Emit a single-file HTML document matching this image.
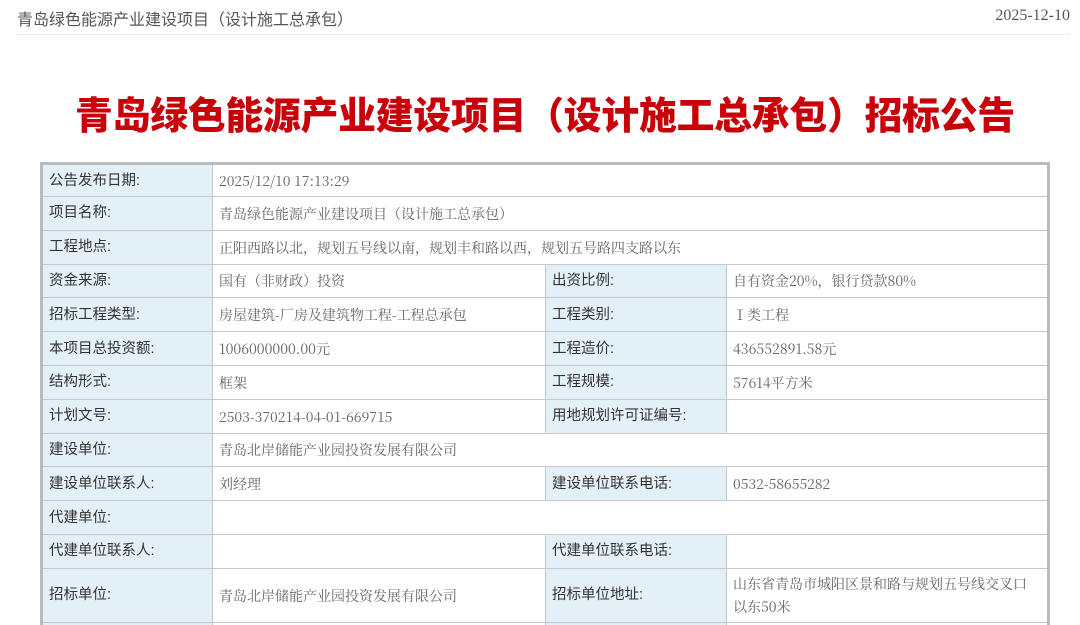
<!DOCTYPE html>
<html><head><meta charset="utf-8"><style>
*{margin:0;padding:0;box-sizing:border-box}
html,body{width:1080px;height:625px;overflow:hidden}
body{background:#fff;font-family:"Liberation Sans","Noto Sans CJK SC",sans-serif;position:relative}
.hd{position:absolute;left:17px;top:6px;font-size:16px;color:#555;}
.dt{position:absolute;right:10px;top:7px;font-size:16px;color:#555;font-family:"Liberation Serif","Noto Serif CJK SC",serif}
.line{position:absolute;left:16px;right:10px;top:34px;border-top:1px dotted #ddd}
h1{position:absolute;left:0;width:1090px;top:89px;text-align:center;font-size:37.8px;color:#c8000a;font-weight:900;letter-spacing:-0.2px;line-height:48px;font-family:"Noto Sans CJK SC",sans-serif;white-space:nowrap}
table{position:absolute;left:40px;top:162px;width:1010px;border-collapse:collapse;border:3px solid #b8bcc0;border-bottom:none;table-layout:fixed}
td{border:1px solid #c5c9cd;height:33.8px;font-size:14.5px;padding:0 6px;vertical-align:middle;line-height:18px}
td.l{background:#e4f0f8;color:#333;}
td.v{color:#666;font-family:"Noto Serif CJK SC","Liberation Serif",serif;font-size:14px;padding-top:1px}
tr:first-child td{height:33px}
</style></head><body>
<div class="hd">青岛绿色能源产业建设项目（设计施工总承包）</div>
<div class="dt">2025-12-10</div>
<div class="line"></div>
<h1>青岛绿色能源产业建设项目（设计施工总承包）招标公告</h1>
<table>
<colgroup><col style="width:171px"><col style="width:333px"><col style="width:181px"><col></colgroup>
<tr><td class="l">公告发布日期:</td><td class="v" colspan="3">2025/12/10 17:13:29</td></tr>
<tr><td class="l">项目名称:</td><td class="v" colspan="3">青岛绿色能源产业建设项目（设计施工总承包）</td></tr>
<tr><td class="l">工程地点:</td><td class="v" colspan="3">正阳西路以北，规划五号线以南，规划丰和路以西，规划五号路四支路以东</td></tr>
<tr><td class="l">资金来源:</td><td class="v">国有（非财政）投资</td><td class="l">出资比例:</td><td class="v">自有资金20%，银行贷款80%</td></tr>
<tr><td class="l">招标工程类型:</td><td class="v">房屋建筑-厂房及建筑物工程-工程总承包</td><td class="l">工程类别:</td><td class="v">Ⅰ类工程</td></tr>
<tr><td class="l">本项目总投资额:</td><td class="v">1006000000.00元</td><td class="l">工程造价:</td><td class="v">436552891.58元</td></tr>
<tr><td class="l">结构形式:</td><td class="v">框架</td><td class="l">工程规模:</td><td class="v">57614平方米</td></tr>
<tr><td class="l">计划文号:</td><td class="v">2503-370214-04-01-669715</td><td class="l">用地规划许可证编号:</td><td class="v"></td></tr>
<tr><td class="l">建设单位:</td><td class="v" colspan="3">青岛北岸储能产业园投资发展有限公司</td></tr>
<tr><td class="l">建设单位联系人:</td><td class="v">刘经理</td><td class="l">建设单位联系电话:</td><td class="v">0532-58655282</td></tr>
<tr><td class="l">代建单位:</td><td class="v" colspan="3"></td></tr>
<tr><td class="l">代建单位联系人:</td><td class="v"></td><td class="l">代建单位联系电话:</td><td class="v"></td></tr>
<tr><td class="l" style="height:54px">招标单位:</td><td class="v">青岛北岸储能产业园投资发展有限公司</td><td class="l">招标单位地址:</td><td class="v" style="line-height:23px;padding-right:18px">山东省青岛市城阳区景和路与规划五号线交叉口以东50米</td></tr>
<tr><td class="l"></td><td class="v"></td><td class="l"></td><td class="v"></td></tr>
</table>
</body></html>
